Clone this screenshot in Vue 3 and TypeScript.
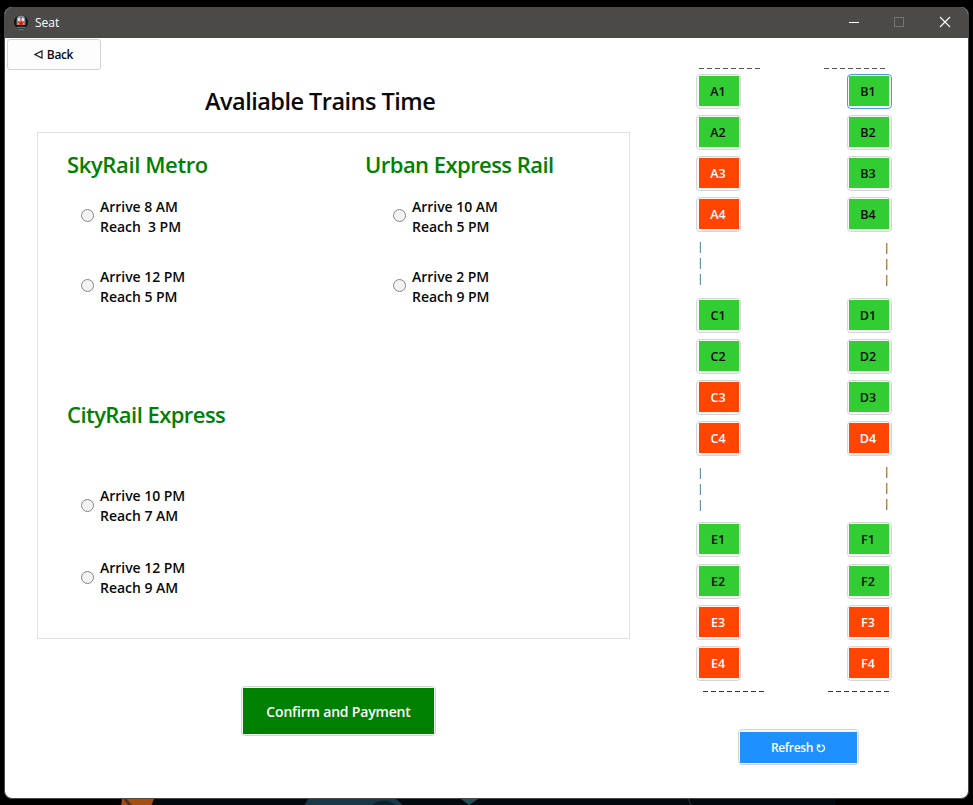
<script setup lang="ts">
import { ref } from 'vue'

interface Seat {
  id: string
  taken: boolean
}
interface Trip {
  key: string
  depart: string
  reach: string
}
interface Train {
  slug: string
  name: string
  trips: Trip[]
}

const makeSeats = (row: string, firstTaken: number): Seat[] =>
  [1, 2, 3, 4].map((n) => ({ id: row + n, taken: n >= firstTaken }))

const columns = [
  { side: 'left', groups: [makeSeats('A', 3), makeSeats('C', 3), makeSeats('E', 3)] },
  { side: 'right', groups: [makeSeats('B', 5), makeSeats('D', 4), makeSeats('F', 3)] },
]

const trains: Train[] = [
  {
    slug: 'sky',
    name: 'SkyRail Metro',
    trips: [
      { key: 's1', depart: 'Arrive 8 AM', reach: 'Reach  3 PM' },
      { key: 's2', depart: 'Arrive 12 PM', reach: 'Reach 5 PM' },
    ],
  },
  {
    slug: 'urban',
    name: 'Urban Express Rail',
    trips: [
      { key: 'u1', depart: 'Arrive 10 AM', reach: 'Reach 5 PM' },
      { key: 'u2', depart: 'Arrive 2 PM', reach: 'Reach 9 PM' },
    ],
  },
  {
    slug: 'city',
    name: 'CityRail Express',
    trips: [
      { key: 'c1', depart: 'Arrive 10 PM', reach: 'Reach 7 AM' },
      { key: 'c2', depart: 'Arrive 12 PM', reach: 'Reach 9 AM' },
    ],
  },
]

const chosenTrip = ref('')
const focusedSeat = ref('B1')
</script>

<template>
  <div class="desktop">
    <div class="window">
      <header class="titlebar">
        <svg class="app-icon" viewBox="0 0 14 15">
          <circle cx="7" cy="7.200" r="7" fill="#111417" />
          <path d="M2.600 10V4.500C2.600 1.800 4.300.4 7 .4s4.400 1.400 4.400 4.100V10z" fill="#7d93a3" />
          <path d="M4 3h6v3.500H4z" fill="#dfe8ee" />
          <path d="M6.300 2h1.400v4.500H6.300z" fill="#e8452b" />
          <path d="M3.600 6.300h6.800v3.600H3.600z" fill="#e8452b" />
          <path d="M5.500 7.200h3v2h-3z" fill="#a82c1c" />
          <circle cx="4.500" cy="8.800" r=".6" fill="#ffd9c8" />
          <circle cx="9.500" cy="8.800" r=".6" fill="#ffd9c8" />
          <path d="M2.500 12.300h9M4.300 14.200h5.400" stroke="#5a9fc0" stroke-width=".9" />
        </svg>
        <span class="app-name">Seat</span>
        <svg class="controls" viewBox="0 0 106 14">
          <path d="M1 7.500h10" stroke="#fff" stroke-width="1" />
          <rect x="46.500" y="2.500" width="9" height="9" fill="none" stroke="#74726f" />
          <path d="M92 2l10 10M102 2L92 12" stroke="#fff" stroke-width="1.100" />
        </svg>
      </header>

      <main class="content">
        <section class="booking">
          <button class="back" type="button">
            <svg viewBox="0 0 9 9"><path d="M8 .9v7.200L.9 4.500z" fill="none" stroke="#1a1a1a" stroke-width="1.200" /></svg>
            <span>Back</span>
          </button>
          <h1>Avaliable Trains Time</h1>
          <div class="panel">
            <article v-for="train in trains" :key="train.slug" class="train" :class="train.slug">
              <h2>{{ train.name }}</h2>
              <label v-for="trip in train.trips" :key="trip.key" class="trip">
                <input v-model="chosenTrip" type="radio" name="trip" :value="trip.key" />
                <span class="times">{{ trip.depart }}<br />{{ trip.reach }}</span>
              </label>
            </article>
          </div>
          <button class="framed confirm" type="button"><span>Confirm and Payment</span></button>
        </section>

        <section class="coach">
          <div class="seat-map">
            <div v-for="col in columns" :key="col.side" class="column" :class="col.side">
              <div class="wall top"><i v-for="n in 8" :key="n"></i></div>
              <template v-for="(group, g) in col.groups" :key="g">
                <div v-if="g > 0" class="door" :class="'door-' + g"><i v-for="n in 3" :key="n"></i></div>
                <div class="group">
                  <button
                    v-for="seat in group"
                    :key="seat.id"
                    type="button"
                    class="framed seat"
                    :class="{ taken: seat.taken, focused: focusedSeat === seat.id }"
                    @click="focusedSeat = seat.id"
                  >
                    <span>{{ seat.id }}</span>
                  </button>
                </div>
              </template>
              <div class="wall bottom"><i v-for="n in 8" :key="n"></i></div>
            </div>
          </div>
          <button class="framed refresh" type="button">
            <span>Refresh
              <svg viewBox="0 0 10 10"><path d="M.8 2.200h2.800v2.300M3.500 2.400C1.400 3.400 1 5.200 1.700 6.700c1.200 2.300 5 2.500 6.300.2.900-1.600.500-3.600-1.200-4.500L5.600 2" fill="none" stroke="#fff" stroke-width="1.300" /></svg>
            </span>
          </button>
        </section>
      </main>
    </div>
    <svg class="wallpaper" viewBox="0 0 973 7">
      <path d="M155 0h840v7H150z" fill="#030a0f" />
      <path d="M122 0h32l-3 7H121z" fill="#a94c10" />
      <path d="M123 0h4l6 7h-4z" fill="#4a3526" />
      <path d="M308 0h88l8 7H304z" fill="#17394a" />
      <path d="M370 7q10-7 18-5l10 5z" fill="#0b202b" />
      <path d="M461 0h17l-9 6z" fill="#24505c" />
      <path d="M688 0l4 7" stroke="#1c3c48" />
      <path d="M835 0h138v7H835z" fill="#000" />
    </svg>
  </div>
</template>

<style>
body {
  margin: 0;
  background: #000;
}
</style>

<style scoped>
.desktop {
  box-sizing: border-box;
  display: flex;
  flex-direction: column;
  width: 973px;
  height: 805px;
  padding: 7px 0 0;
  overflow: hidden;
  background: #000;
  font-family: 'Open Sans', 'Noto Sans', sans-serif;
  font-weight: 600;
  color: #0a0a0a;
}
.window {
  box-sizing: border-box;
  flex: none;
  display: flex;
  flex-direction: column;
  width: 965px;
  height: 792px;
  margin-left: 4px;
  overflow: hidden;
  border: 1px solid #4b4a48;
  border-top: 0;
  border-radius: 8px;
  background: #fff;
}
.wallpaper {
  display: block;
  width: 973px;
  height: 7px;
  flex: none;
}
.titlebar {
  box-sizing: border-box;
  flex: none;
  display: flex;
  align-items: center;
  height: 31px;
  padding: 0 14px 1px 9px;
  background: #4b4a48;
  color: #fff;
}
.app-icon {
  width: 14px;
  height: 15px;
}
.app-name {
  flex: 1;
  margin-left: 7px;
  padding-top: 1px;
  font-size: 12px;
  font-weight: 400;
}
.controls {
  width: 106px;
  height: 14px;
}
.content {
  flex: 1;
  display: flex;
}
.booking {
  width: 691px;
  display: flex;
  flex-direction: column;
  align-items: flex-start;
}
button {
  box-sizing: border-box;
  font: inherit;
  color: inherit;
}
.back {
  display: flex;
  align-items: center;
  justify-content: center;
  gap: 4px;
  width: 94px;
  height: 31px;
  margin: 1px 0 0 2px;
  padding: 0 1px 1px 0;
  border: 1px solid #d4d4d4;
  border-radius: 3px;
  background: #fdfdfd;
  font-size: 12px;
  letter-spacing: -0.35px;
}
.back svg {
  width: 9px;
  height: 9px;
}
h1 {
  margin: 15px 0 0 200px;
  font-size: 23.5px;
  line-height: 32px;
  font-weight: 600;
  letter-spacing: -0.52px;
  white-space: nowrap;
}
.panel {
  box-sizing: border-box;
  display: grid;
  grid-template-columns: 298px 1fr;
  grid-template-rows: 250px 1fr;
  width: 593px;
  height: 507px;
  margin: 15px 0 0 32px;
  padding: 16px 0 0 29px;
  border: 1px solid #e0e0e0;
}
h2 {
  margin: 0;
  font-size: 22px;
  line-height: 30px;
  font-weight: 600;
  letter-spacing: -0.55px;
  color: #008000;
  white-space: nowrap;
}
.sky h2 {
  letter-spacing: -0.38px;
}
.trip {
  display: flex;
  align-items: center;
  height: 40px;
  margin-left: 14px;
}
.urban .trip {
  margin-left: 28px;
}
h2 + .trip {
  margin-top: 18px;
}
.trip + .trip {
  margin-top: 30px;
}
.city h2 + .trip {
  margin-top: 57px;
}
.city .trip + .trip {
  margin-top: 32px;
}
.trip input {
  appearance: none;
  box-sizing: border-box;
  width: 13px;
  height: 13px;
  margin: -4px 6px 0 0;
  border: 1px solid #858585;
  border-radius: 50%;
  background: #f3f3f3;
}
.city .trip input {
  margin-top: -2px;
}
.trip input:checked {
  box-shadow: inset 0 0 0 3px #f3f3f3;
  background: #333;
}
.times {
  font-size: 14px;
  line-height: 20px;
  letter-spacing: -0.03px;
  white-space: pre;
}
.framed {
  display: block;
  padding: 1px;
  border: 1px solid #d5d5d5;
  border-radius: 4px;
  background: #f6f6f6;
}
.framed > span {
  display: flex;
  align-items: center;
  justify-content: center;
  width: 100%;
  height: 100%;
}
.confirm {
  width: 195px;
  height: 50px;
  margin: 47px 0 0 236px;
  color: #fff;
  font-size: 14px;
  letter-spacing: -0.18px;
}
.confirm > span {
  background: #008000;
}
.coach {
  display: flex;
  flex-direction: column;
}
.seat-map {
  display: flex;
  gap: 62px;
}
.column {
  width: 63px;
  padding-top: 30px;
}
.wall {
  display: flex;
  gap: 3px;
  margin-left: 3px;
}
.wall i {
  flex: none;
  width: 5px;
  height: 1px;
  background: #555;
}
.wall.bottom {
  margin: 10px 0 0 7px;
}
.wall.bottom i {
  background: #333;
}
.group {
  display: flex;
  flex-direction: column;
  gap: 6px;
  width: 45px;
}
.wall + .group {
  margin-top: 5px;
}
.right .group {
  margin-left: 26px;
}
.door-2 + .group .seat:first-child {
  margin-bottom: 1px;
}
.seat {
  width: 45px;
  height: 35px;
  padding: 1px 1px 2px 2px;
  font-size: 12.5px;
}
.right .seat {
  padding: 1px 2px 2px 1px;
}
.seat > span {
  box-sizing: border-box;
  padding-right: 2px;
  background: #32cd32;
}
.seat.taken {
  color: #fff;
}
.seat.taken > span {
  background: #ff4500;
}
.seat.focused {
  border-color: #4a9ae0;
}
.door {
  box-sizing: border-box;
  display: flex;
  flex-direction: column;
  gap: 5px;
  width: 1px;
  height: 66px;
  padding: 10px 0 13px;
  margin-left: 4px;
}
.door-2 {
  padding: 12px 0 11px;
}
.right .door {
  margin-left: 65px;
  padding-top: 11px;
  padding-bottom: 12px;
}
.door i {
  width: 1px;
  height: 11px;
  background: #6f93ad;
}
.left .door i {
  box-shadow: -1px 0 0 #f2e6dc;
}
.right .door i {
  background: #b5834f;
  box-shadow: 1px 0 0 #b9d2e8;
}
.refresh {
  width: 121px;
  height: 36px;
  margin: 37px 0 0 42px;
  padding-top: 2px;
  color: #fff;
  font-size: 12px;
  letter-spacing: -0.35px;
}
.refresh > span {
  background: #1e90ff;
}
.refresh svg {
  width: 10px;
  height: 10px;
  margin: 1px 0 0 3px;
}
</style>
